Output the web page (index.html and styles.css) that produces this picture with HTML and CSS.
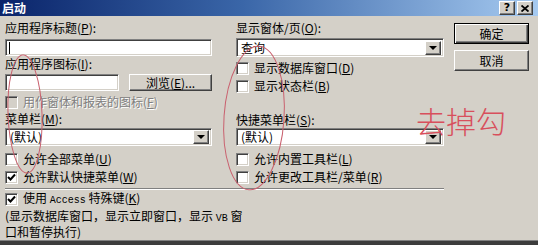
FILE: index.html
```html
<!DOCTYPE html>
<html>
<head>
<meta charset="utf-8">
<link rel="stylesheet" href="styles.css">
</head>
<body>
<div class="window">
  <div class="titlebar">
    <span class="title">启动</span>
    <div class="tb-btns">
      <span class="tb-btn help">?</span>
      <span class="tb-btn close"><svg width="8" height="7" viewBox="0 0 8 7"><path d="M0.5 0.5 L7.5 6.5 M7.5 0.5 L0.5 6.5" stroke="#000" stroke-width="1.8"/></svg></span>
    </div>
  </div>
  <div class="body">
    <div class="form">
      <div class="cols">
        <div class="col">
          <div class="lbl">应用程序标题(<u>P</u>):</div>
          <div class="textbox tb1"><span class="caret"></span></div>
          <div class="lbl">应用程序图标(<u>I</u>):</div>
          <div class="browse-row">
            <div class="textbox tb2"></div>
            <div class="btn browse">浏览(<u>E</u>)...</div>
          </div>
          <div class="chk disabled dis-row"><span class="box"></span><span>用作窗体和报表的图标(<u>F</u>)</span></div>
          <div class="lbl l-menu">菜单栏(<u>M</u>):</div>
          <div class="combo c-menu"><span class="val">(默认)</span><span class="drop"><span class="tri"></span></span></div>
          <div class="chk r1"><span class="box"></span><span>允许全部菜单(<u>U</u>)</span></div>
          <div class="chk r2"><span class="box checked"><svg width="9" height="9" viewBox="0 0 9 9"><path d="M1 4 L3.5 6.5 L8 1.5" fill="none" stroke="#000" stroke-width="2"/></svg></span><span>允许默认快捷菜单(<u>W</u>)</span></div>
        </div>
        <div class="col">
          <div class="lbl">显示窗体/页(<u>O</u>):</div>
          <div class="combo c-form"><span class="val">查询</span><span class="drop"><span class="tri"></span></span></div>
          <div class="chk r-db"><span class="box"></span><span>显示数据库窗口(<u>D</u>)</span></div>
          <div class="chk r-db"><span class="box"></span><span>显示状态栏(<u>B</u>)</span></div>
          <div class="lbl l-short">快捷菜单栏(<u>S</u>):</div>
          <div class="combo c-short"><span class="val">(默认)</span><span class="drop"><span class="tri"></span></span></div>
          <div class="chk r1"><span class="box"></span><span>允许内置工具栏(<u>L</u>)</span></div>
          <div class="chk r2"><span class="box"></span><span>允许更改工具栏/菜单(<u>R</u>)</span></div>
        </div>
      </div>
      <div class="sep"></div>
      <div class="chk r-access"><span class="box checked"><svg width="9" height="9" viewBox="0 0 9 9"><path d="M1 4 L3.5 6.5 L8 1.5" fill="none" stroke="#000" stroke-width="2"/></svg></span><span>使用 <span class="lat">Access</span> 特殊键(<u>K</u>)</span></div>
      <div class="note-text">(显示数据库窗口，显示立即窗口，显示 <span class="lat">VB</span> 窗<br>口和暂停执行)</div>
    </div>
    <div class="buttons">
      <div class="btn big default">确定</div>
      <div class="btn big cancel">取消</div>
    </div>
  </div>
  <div class="footer"></div>
  <svg class="marks" width="538" height="245" viewBox="0 0 538 245">
    <ellipse cx="25" cy="114" rx="17" ry="59" fill="none" stroke="#c9606e" stroke-width="1" transform="rotate(-2 25 114)"/>
    <ellipse cx="254" cy="118" rx="30" ry="72" fill="none" stroke="#c9606e" stroke-width="1" transform="rotate(4 254 118)"/>
  </svg>
  <div class="annot">去掉勾</div>
</div>
</body>
</html>
```
FILE: styles.css
```css
* { box-sizing: border-box; }
html, body { margin: 0; padding: 0; }
body {
  background: #d4d0c8;
  font-family: "Noto Sans CJK SC", "DejaVu Sans", sans-serif;
  font-size: 12px;
  color: #000;
}
.window {
  position: relative;
  width: 538px;
  height: 245px;
  display: flex;
  flex-direction: column;
  background: #d4d0c8;
  overflow: hidden;
}
.titlebar {
  height: 16px;
  flex: none;
  display: flex;
  justify-content: space-between;
  align-items: flex-start;
  padding: 0 5px 0 2px;
  background: linear-gradient(to right, #0a246a 0%, #3a66a8 45%, #a6caf0 100%);
}
.title {
  color: #fff;
  font-weight: bold;
  font-size: 12px;
  line-height: 15px;
}
.tb-btns { display: flex; gap: 2px; margin-top: 1px; }
.tb-btn {
  width: 16px;
  height: 14px;
  display: flex;
  align-items: center;
  justify-content: center;
  background: #d4d0c8;
  border: 1px solid;
  border-color: #fff #404040 #404040 #fff;
  box-shadow: inset -1px -1px 0 #808080;
  font-family: "DejaVu Sans", sans-serif;
  font-weight: bold;
  font-size: 11px;
  line-height: 12px;
}
.body {
  flex: 1;
  display: flex;
  padding: 4px 0 0 5px;
}
.form { width: 439px; flex: none; }
.cols { display: flex; gap: 24px; }
.col { display: flex; flex-direction: column; }
.col:first-child { width: 207px; }
.col:last-child { width: 208px; }
.lbl { height: 16px; line-height: 16px; white-space: nowrap; }
u { text-decoration: underline; text-underline-offset: 1px; }
.textbox, .combo {
  background: #fff;
  border: 1px solid;
  border-color: #808080 #fff #fff #808080;
  box-shadow: inset 1px 1px 0 #404040, inset -1px -1px 0 #d4d0c8;
}
.tb1 { margin-top: 3px; height: 17px; padding: 2px 0 0 2px; display: flex; }
.caret { width: 1px; height: 12px; background: #000; margin-left: 1px; }
.browse-row { display: flex; gap: 10px; margin-top: 2px; height: 17px; }
.tb2 { width: 114px; height: 17px; }
.btn {
  background: #d4d0c8;
  border: 1px solid;
  border-color: #fff #404040 #404040 #fff;
  box-shadow: inset -1px -1px 0 #808080;
  display: flex;
  align-items: center;
  justify-content: center;
  white-space: nowrap;
}
.browse { width: 83px; height: 17px; line-height: 15px; }
.chk {
  display: flex;
  align-items: center;
  gap: 5px;
  height: 14px;
  line-height: 14px;
  white-space: nowrap;
}
.box {
  width: 13px;
  height: 13px;
  flex: none;
  background: #fff;
  border: 1px solid;
  border-color: #808080 #fff #fff #808080;
  box-shadow: inset 1px 1px 0 #404040, inset -1px -1px 0 #d4d0c8;
  display: flex;
  align-items: center;
  justify-content: center;
}
.box svg { display: block; }
.disabled { color: #808080; text-shadow: 1px 1px 0 #fff; }
.disabled .box { background: #d4d0c8; }
.dis-row { margin-top: 4px; }
.l-menu { margin-top: 2px; }
.combo {
  display: flex;
  align-items: center;
  padding: 2px;
}
.val { flex: 1; padding-left: 2px; line-height: 14px; }
.drop {
  width: 16px;
  height: 14px;
  flex: none;
  background: #d4d0c8;
  border: 1px solid;
  border-color: #fff #404040 #404040 #fff;
  box-shadow: inset -1px -1px 0 #808080;
  display: flex;
  align-items: center;
  justify-content: center;
}
.tri {
  width: 0; height: 0;
  border-left: 4px solid transparent;
  border-right: 4px solid transparent;
  border-top: 4px solid #000;
}
.c-menu { margin-top: 1px; height: 18px; }
.c-form { margin-top: 2px; height: 19px; }
.c-short { height: 18px; }
.r1 { margin-top: 6px; }
.r2 { margin-top: 4px; }
.r-db { margin-top: 4px; }
.l-short { margin-top: 19px; }
.sep {
  margin-top: 4px;
  height: 2px;
  border-top: 1px solid #808080;
  border-bottom: 1px solid #fff;
}
.r-access { margin-top: 2px; }
.lat { font-family: "Liberation Mono", monospace; font-size: 10px; }
.note-text { margin-top: 3px; line-height: 13px; white-space: nowrap; }
.buttons {
  width: 75px;
  margin-left: 10px;
  display: flex;
  flex-direction: column;
}
.big { height: 21px; }
.default {
  margin-top: 3px;
  border: 1px solid #000;
  box-shadow: inset 1px 1px 0 #fff, inset -1px -1px 0 #404040, inset -2px -2px 0 #808080;
}
.cancel { margin-top: 6px; }
.footer {
  height: 5px;
  flex: none;
  border-top: 1px solid #808080;
  background: #3c3c3c;
}
.marks { position: absolute; left: 0; top: 0; pointer-events: none; }
.annot {
  position: absolute;
  left: 416px;
  top: 102px;
  font-size: 30px;
  line-height: 36px;
  color: #d84f5c;
  font-weight: 300;
  font-family: "Noto Sans CJK SC", sans-serif;
}
```
